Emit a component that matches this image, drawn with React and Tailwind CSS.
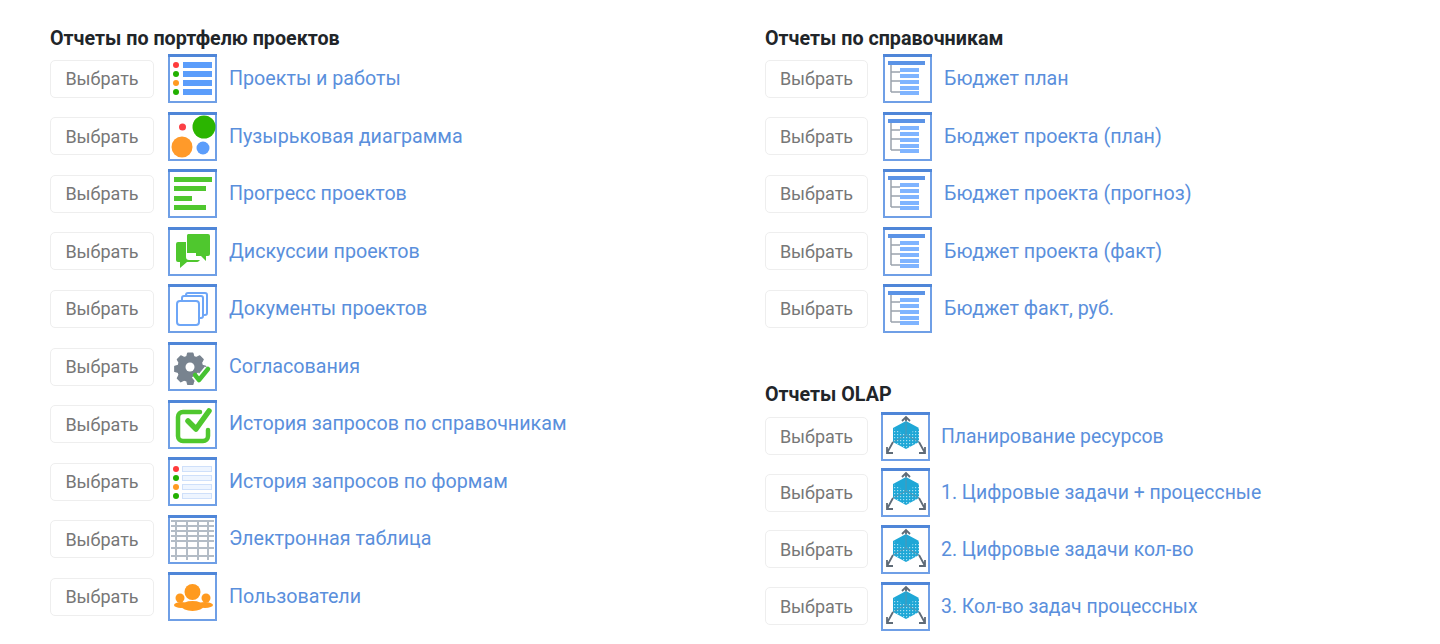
const Frame = ({ children }) => (
  <svg width="49" height="49" viewBox="0 0 49 49" className="shrink-0">
    <rect x="0" y="0" width="49" height="49" fill="#6f9fe6" />
    <rect x="0" y="0" width="49" height="3" fill="#4f86d8" />
    <rect x="2" y="3" width="45" height="44" fill="#fff" />
    {children}
  </svg>
);

const ListIcon = () => (
  <Frame>
    {[
      [11, '#ff3b3b'],
      [20, '#22b000'],
      [29, '#ff9a1f'],
      [38, '#22b000'],
    ].map(([y, c]) => (
      <g key={y}>
        <circle cx="8" cy={y} r="3" fill={c} />
        <rect x="15" y={y - 3} width="29" height="6" fill="#5b9dfb" />
      </g>
    ))}
  </Frame>
);

const BubbleIcon = () => (
  <Frame>
    <circle cx="36" cy="15" r="11.5" fill="#2bb500" />
    <circle cx="14" cy="35" r="10.5" fill="#ff9a2a" />
    <circle cx="35" cy="36" r="6.5" fill="#5b9dfb" />
    <circle cx="14.5" cy="15" r="3.5" fill="#fb3f45" />
  </Frame>
);

const ProgressIcon = () => (
  <Frame>
    <rect x="6" y="8" width="38" height="5" fill="#4fc72e" />
    <rect x="6" y="17" width="32" height="5" fill="#4fc72e" />
    <rect x="6" y="27" width="18" height="5" fill="#4fc72e" />
    <rect x="6" y="36" width="32" height="5" fill="#4fc72e" />
  </Frame>
);

const ChatIcon = () => (
  <Frame>
    <path d="M20 7h20a2 2 0 0 1 2 2v18a2 2 0 0 1-2 2h-2v5l-5-5h-5v-3h-9V9a2 2 0 0 1 1-2z" fill="#4fc72e" />
    <path d="M10 15h8v15a3 3 0 0 0 3 3h11l-1 1a3 3 0 0 1-2 1H19l-7 6v-6h-2a2 2 0 0 1-2-2V17a2 2 0 0 1 2-2z" fill="#4fc72e" />
  </Frame>
);

const DocsIcon = () => (
  <Frame>
    <g fill="#fff" stroke="#6ea6f7" strokeWidth="2">
      <rect x="18" y="9" width="21" height="22" rx="2" />
      <rect x="14" y="12" width="21" height="22" rx="2" />
      <rect x="9" y="17" width="22" height="24" rx="3" />
    </g>
  </Frame>
);

const GearIcon = () => (
  <Frame>
    <path
      d="M20 10h6l1 4 3 1.300 4-2 4 4-2 4 1 3 4 1v6l-4 1-1 3 2 4-4 4-4-2-3 1-1 4h-6l-1-4-3-1-4 2-4-4 2-4-1-3-4-1v-6l4-1 1-3-2-4 4-4 4 2 3-1.300z"
      fill="#78838f"
      stroke="#78838f"
      strokeWidth="1.500"
      strokeLinejoin="round"
      transform="translate(2.500 2.500) scale(0.86)"
    />
    <circle cx="22" cy="25" r="4.500" fill="#fff" />
    <path d="M27 33l4 5 9-11" fill="none" stroke="#fff" strokeWidth="8" />
    <path d="M27 33l4 5 9-11" fill="none" stroke="#46c232" strokeWidth="4.500" strokeLinecap="round" strokeLinejoin="round" />
  </Frame>
);

const CheckIcon = () => (
  <Frame>
    <path d="M32 12H15a5 5 0 0 0-5 5v19a5 5 0 0 0 5 5h20a5 5 0 0 0 5-5v-6" fill="none" stroke="#4fc72e" strokeWidth="4.500" strokeLinecap="round" />
    <path d="M20 21l8 8 13-18" fill="none" stroke="#4fc72e" strokeWidth="5.500" strokeLinecap="round" strokeLinejoin="round" />
  </Frame>
);

const FormIcon = () => (
  <Frame>
    {[
      [12, '#ff3b3b'],
      [21, '#22b000'],
      [30, '#ff9a1f'],
      [39, '#22b000'],
    ].map(([y, c]) => (
      <g key={y}>
        <circle cx="8" cy={y} r="3" fill={c} />
        <rect x="14.500" y={y - 2.500} width="29" height="5" fill="#eef5ff" stroke="#cfe0fa" />
      </g>
    ))}
  </Frame>
);

const GridIcon = () => (
  <Frame>
    <g stroke="#b3bcc6" strokeWidth="2">
      {[8, 19, 30, 40].map((x) => (
        <line key={x} x1={x} y1="5" x2={x} y2="45" />
      ))}
      {[6, 11, 16, 21, 26, 33, 41].map((y) => (
        <line key={y} x1="3" y1={y} x2="46" y2={y} />
      ))}
    </g>
  </Frame>
);

const UsersIcon = () => (
  <Frame>
    <g fill="#ff9a1f">
      <circle cx="24.500" cy="20" r="8" />
      <circle cx="12" cy="26" r="4.500" />
      <circle cx="38" cy="26" r="4.500" />
      <ellipse cx="24.500" cy="34" rx="11" ry="5" />
      <ellipse cx="13" cy="33" rx="7" ry="3" />
      <ellipse cx="37" cy="33" rx="8" ry="3" />
    </g>
  </Frame>
);

const TableIcon = () => (
  <Frame>
    <rect x="5" y="7" width="37" height="4" fill="#5b93e6" />
    <path d="M8 11v27M8 18h9M8 27h9M8 38h9" fill="none" stroke="#9aa3ad" strokeWidth="1.500" />
    {[14, 20, 26, 32, 37].map((y) => (
      <rect key={y} x="17" y={y} width="19" height="4" fill="#7fb4ff" />
    ))}
  </Frame>
);

const CubeIcon = () => (
  <Frame>
    <defs>
      <pattern id="cube-dots" width="3" height="3" patternUnits="userSpaceOnUse">
        <rect x="1" y="1" width="1.200" height="1.200" fill="#a9dff2" />
      </pattern>
    </defs>
    <path d="M25 9L38 16v14l-13 7L12 30V16z" fill="#1ea7d6" />
    <path d="M25 23L38 16v14l-13 7L12 30V16z" fill="url(#cube-dots)" />
    <path d="M25 23V9M25 23L12 30M25 23L38 30" fill="none" stroke="#5f8fa8" strokeWidth="0.800" />
    <g fill="none" stroke="#5f6b77" strokeWidth="1.800">
      <path d="M25 9V5M21 9l4-4 4 4" />
      <path d="M12 30L6 41M6 35v6h6" />
      <path d="M38 30L44 41M44 35v6h-6" />
    </g>
  </Frame>
);

const Row = ({ icon: Icon, label, wide, olap }) => (
  <div className={olap ? 'flex h-[56.700px] items-center' : 'flex h-[57.550px] items-center'}>
    <button className={`h-[38px] shrink-0 rounded-[5px] border border-[#eeeeee] bg-white text-[18px] text-[#777777] ${wide ? 'w-[104px]' : 'w-[103px]'}`}>
      Выбрать
    </button>
    <div className={olap ? 'ml-[13px]' : wide ? 'ml-[14px]' : 'ml-[15px]'}>
      <Icon />
    </div>
    <a className={olap ? 'ml-[11px] text-[19.400px] whitespace-nowrap text-[#5a8fdc]' : 'ml-[12px] text-[19.700px] whitespace-nowrap text-[#5a8fdc]'}>
      {label}
    </a>
  </div>
);

const Heading = ({ children }) => (
  <h2 className="text-[19.700px] leading-[22px] font-bold text-[#212529]">{children}</h2>
);

const portfolio = [
  [ListIcon, 'Проекты и работы'],
  [BubbleIcon, 'Пузырьковая диаграмма'],
  [ProgressIcon, 'Прогресс проектов'],
  [ChatIcon, 'Дискуссии проектов'],
  [DocsIcon, 'Документы проектов'],
  [GearIcon, 'Согласования'],
  [CheckIcon, 'История запросов по справочникам'],
  [FormIcon, 'История запросов по формам'],
  [GridIcon, 'Электронная таблица'],
  [UsersIcon, 'Пользователи'],
];

const budgets = ['Бюджет план', 'Бюджет проекта (план)', 'Бюджет проекта (прогноз)', 'Бюджет проекта (факт)', 'Бюджет факт, руб.'];
const olap = ['Планирование ресурсов', '1. Цифровые задачи + процессные', '2. Цифровые задачи кол-во', '3. Кол-во задач процессных'];

export default function App() {
  return (
    <div className="flex h-[644px] overflow-hidden bg-white pt-[28px] font-['Roboto','Liberation_Sans',sans-serif]">
      <div className="ml-[50px] w-[715px]">
        <Heading>Отчеты по портфелю проектов</Heading>
        <div>
          {portfolio.map(([icon, label]) => (
            <Row key={label} icon={icon} label={label} wide />
          ))}
        </div>
      </div>
      <div>
        <Heading>Отчеты по справочникам</Heading>
        <div>
          {budgets.map((label) => (
            <Row key={label} icon={TableIcon} label={label} />
          ))}
        </div>
        <div className="mt-[46px]">
          <Heading>Отчеты OLAP</Heading>
        </div>
        <div className="pt-[2px]">
          {olap.map((label) => (
            <Row key={label} icon={CubeIcon} label={label} olap />
          ))}
        </div>
      </div>
    </div>
  );
}
